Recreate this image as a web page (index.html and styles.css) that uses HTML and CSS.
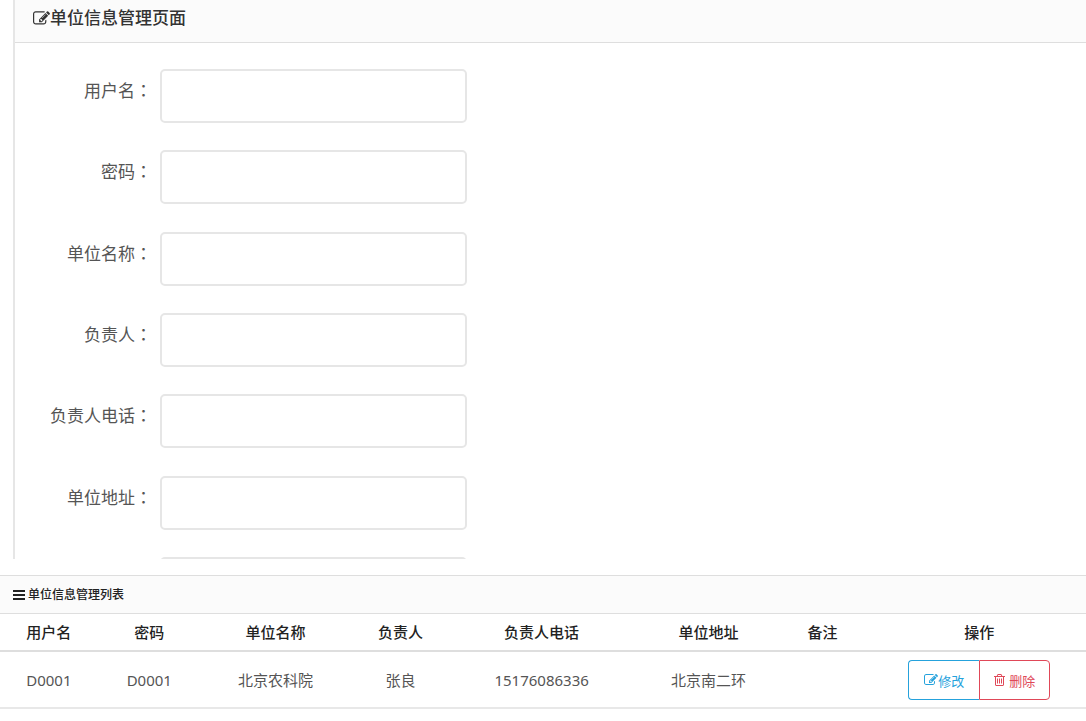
FILE: index.html
```html
<!DOCTYPE html>
<html lang="zh-CN">
<head>
<meta charset="utf-8">
<title>单位信息管理</title>
<link rel="stylesheet" href="styles.css">
</head>
<body>
<svg class="sprite" aria-hidden="true">
  <symbol id="icon-edit" viewBox="0 128 1792 1536"><path d="M888 1184l116-116-152-152-116 116v56h96v96h56zm440-720q-16-16-33 1l-350 350q-17 17-1 33t33-1l350-350q17-17 1-33zm80 594v190q0 119-84.500 203.500t-203.500 84.500h-832q-119 0-203.500-84.500t-84.500-203.500v-832q0-119 84.500-203.500t203.500-84.500h832q63 0 117 25 15 7 18 23 3 17-9 29l-49 49q-14 14-32 8-23-6-45-6h-832q-66 0-113 47t-47 113v832q0 66 47 113t113 47h832q66 0 113-47t47-113v-126q0-13 9-22l64-64q15-15 35-7t20 29zm-96-738l288 288-672 672h-288v-288zm444 132l-92 92-288-288 92-92q28-28 68-28t68 28l152 152q28 28 28 68t-28 68z"/></symbol>
  <symbol id="icon-trash" viewBox="192 128 1408 1536"><path d="M704 736v576q0 14-9 23t-23 9h-64q-14 0-23-9t-9-23v-576q0-14 9-23t23-9h64q14 0 23 9t9 23zm256 0v576q0 14-9 23t-23 9h-64q-14 0-23-9t-9-23v-576q0-14 9-23t23-9h64q14 0 23 9t9 23zm256 0v576q0 14-9 23t-23 9h-64q-14 0-23-9t-9-23v-576q0-14 9-23t23-9h64q14 0 23 9t9 23zm128 724v-948h-896v948q0 22 7 40.500t14.500 27 10.500 8.500h832q3 0 10.500-8.500t14.500-27 7-40.500zm-672-1076h448l-48-117q-7-9-17-11h-317q-10 2-17 11zm928 32v64q0 14-9 23t-23 9h-96v948q0 83-47 143.500t-113 60.500h-832q-66 0-113-58.500t-47-141.500v-952h-96q-14 0-23-9t-9-23v-64q0-14 9-23t23-9h309l70-167q15-37 54-63t79-26h320q40 0 79 26t54 63l70 167h309q14 0 23 9t9 23z"/></symbol>
  <symbol id="icon-bars" viewBox="0 0 12 10"><path d="M0 0h12v2H0zM0 4h12v2H0zM0 8h12v2H0z"/></symbol>
</svg>

<section class="panel">
  <h1 class="panel-title"><svg class="icon-title"><use href="#icon-edit"/></svg>单位信息管理页面</h1>
  <form class="form">
    <div class="row"><label for="user">用户名<span class="colon" lang="zh-TW">：</span></label><input id="user" type="text"></div>
    <div class="row"><label for="pass">密码<span class="colon" lang="zh-TW">：</span></label><input id="pass" type="text"></div>
    <div class="row"><label for="unit">单位名称<span class="colon" lang="zh-TW">：</span></label><input id="unit" type="text"></div>
    <div class="row"><label for="head">负责人<span class="colon" lang="zh-TW">：</span></label><input id="head" type="text"></div>
    <div class="row"><label for="phone">负责人电话<span class="colon" lang="zh-TW">：</span></label><input id="phone" type="text"></div>
    <div class="row"><label for="addr">单位地址<span class="colon" lang="zh-TW">：</span></label><input id="addr" type="text"></div>
    <div class="row row-cut"><input type="text" aria-label="备注"></div>
  </form>
</section>

<section class="list">
  <h2 class="list-title"><svg class="icon-bars"><use href="#icon-bars"/></svg>单位信息管理列表</h2>
  <table class="table">
    <colgroup>
      <col class="c-user"><col class="c-pass"><col class="c-unit"><col class="c-head">
      <col class="c-phone"><col class="c-addr"><col class="c-note"><col>
    </colgroup>
    <thead>
      <tr><th>用户名</th><th>密码</th><th>单位名称</th><th>负责人</th><th>负责人电话</th><th>单位地址</th><th>备注</th><th class="ops">操作</th></tr>
    </thead>
    <tbody>
      <tr>
        <td>D0001</td><td>D0001</td><td>北京农科院</td><td>张良</td><td>15176086336</td><td>北京南二环</td><td></td>
        <td class="ops"><div class="btn-group"><button type="button" class="btn btn-edit"><svg class="icon-edit"><use href="#icon-edit"/></svg>修改</button><button type="button" class="btn btn-delete"><svg class="icon-trash"><use href="#icon-trash"/></svg>删除</button></div></td>
      </tr>
    </tbody>
  </table>
</section>
</body>
</html>
```
FILE: styles.css
```css
* { box-sizing: border-box; }

body {
  margin: 0;
  background: #fff;
  color: #555;
  font-family: "Noto Sans", "Noto Sans CJK SC", sans-serif;
  font-size: 15px;
}

svg { fill: currentColor; flex: none; }
.sprite { display: none; }

.panel {
  display: flex;
  flex-direction: column;
  height: 559px;
  margin-left: 13px;
  border-left: 2px solid #e6e6e6;
  overflow: hidden;
}

.panel-title {
  display: flex;
  align-items: center;
  margin: 0;
  padding: 4px 18px 10px;
  border-bottom: 1px solid #dedede;
  background: #fbfbfb;
  color: #333;
  font-size: 17px;
  font-weight: 500;
  line-height: 28px;
}

.icon-title { width: 17px; height: 15px; }

.form {
  display: flex;
  flex: 1;
  flex-direction: column;
  justify-content: space-between;
  padding-top: 26px;
}

.row { display: flex; }

.row label {
  width: 137px;
  margin-right: 8px;
  padding-top: 9px;
  font-size: 17px;
  line-height: 24px;
  text-align: right;
}

.colon { font-family: "Noto Sans CJK TC", sans-serif; }

.row input {
  width: 307px;
  height: 54px;
  padding: 0 12px;
  border: 2px solid #e6e6e6;
  border-radius: 5px;
  background: #fff;
  font: inherit;
}

.row-cut {
  height: 2px;
  padding-left: 145px;
  overflow: hidden;
}

.list {
  margin-top: 16px;
  border-top: 1px solid #dedede;
}

.list-title {
  display: flex;
  align-items: center;
  gap: 3px;
  margin: 0;
  padding: 7px 13px;
  border-bottom: 1px solid #dedede;
  background: #fbfbfb;
  color: #222;
  font-size: 12px;
  font-weight: 500;
  line-height: 23px;
}

.icon-bars { width: 12px; height: 10px; }

.table {
  width: 100%;
  border-collapse: separate;
  border-spacing: 0;
  table-layout: fixed;
  text-align: center;
}

.c-user { width: 9%; }
.c-pass { width: 9.5%; }
.c-unit { width: 13.75%; }
.c-head { width: 9.25%; }
.c-phone { width: 16.75%; }
.c-addr { width: 14%; }
.c-note { width: 7%; }

.table th {
  padding: 6px 0;
  border-bottom: 2px solid #dedede;
  color: #222;
  font-weight: 500;
  line-height: 24px;
}

.table td {
  padding: 8px 0 7px;
  border-bottom: 2px solid #e8e8e8;
  line-height: 24px;
}

.table .ops { padding-left: 12px; }

.btn-group { display: flex; justify-content: center; }

.btn {
  display: flex;
  align-items: center;
  justify-content: center;
  width: 71px;
  height: 40px;
  padding: 0;
  border: 1px solid;
  background: #fff;
  font-family: inherit;
  font-size: 13px;
}

.btn-edit {
  border-right: 0;
  border-radius: 4px 0 0 4px;
  color: #25a2dc;
}

.btn-delete {
  gap: 4px;
  border-radius: 0 4px 4px 0;
  color: #e04858;
}

.icon-edit { width: 14px; height: 12px; }
.icon-trash { width: 11px; height: 12px; }
```
